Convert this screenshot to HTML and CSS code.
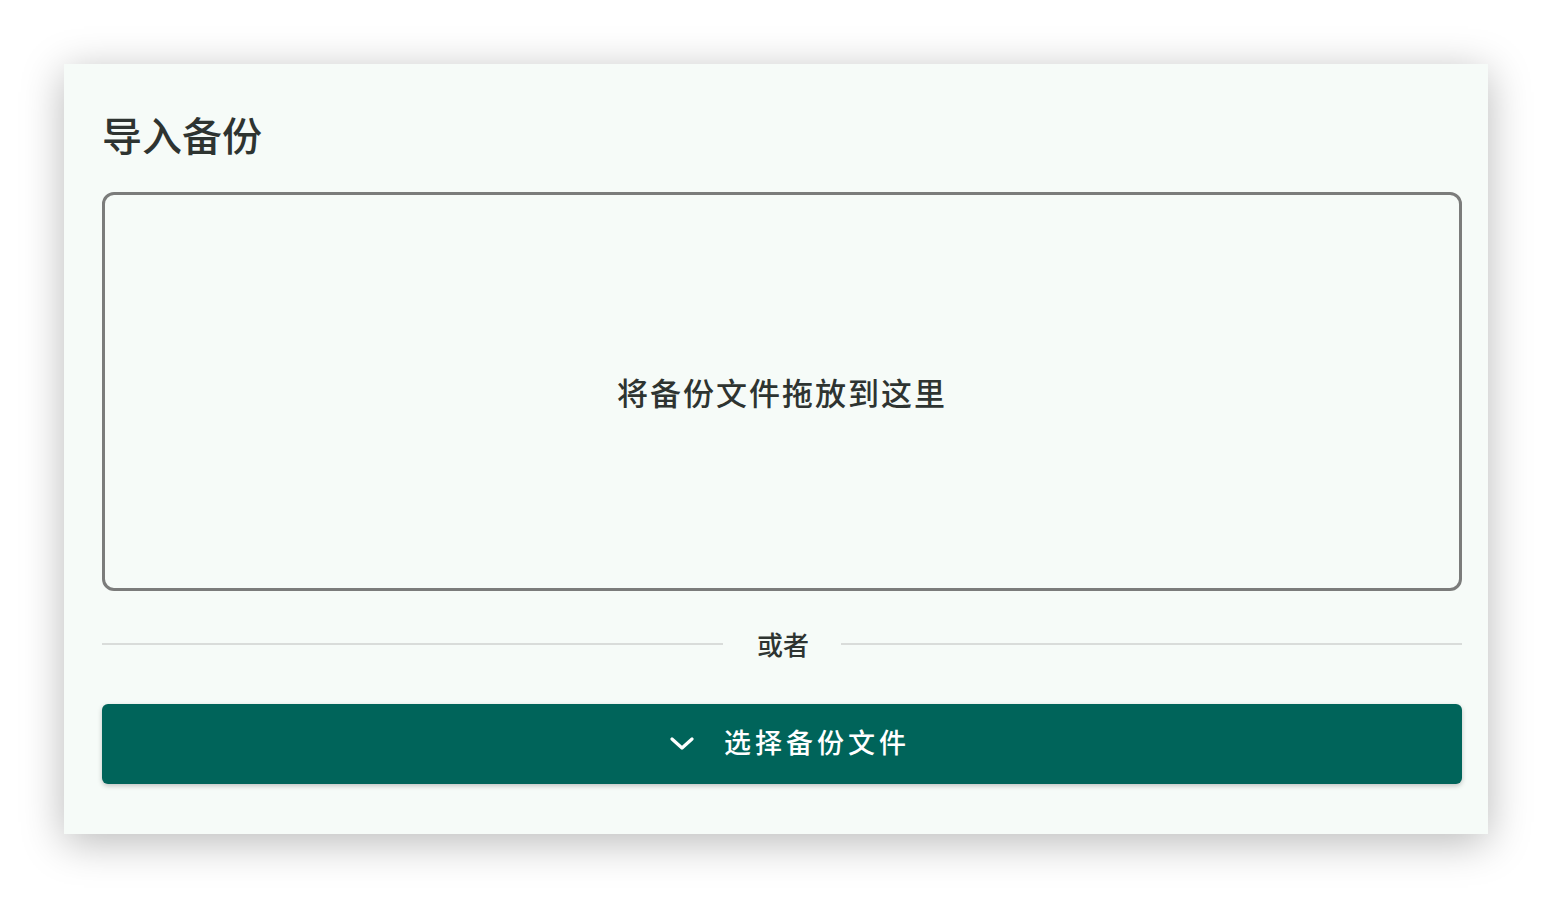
FILE: index.html
```html
<!DOCTYPE html>
<html lang="zh">
<head>
<meta charset="utf-8">
<link rel="stylesheet" href="styles.css">
</head>
<body>
<div class="page">
  <section class="card">
    <h1 class="title">导入备份</h1>
    <div class="dropzone">将备份文件拖放到这里</div>
    <div class="divider"><span class="line"></span><span class="or">或者</span><span class="line"></span></div>
    <button class="pick">
      <svg class="chev" width="24" height="14" viewBox="0 0 24 14"><path d="M2 2 L12 11 L22 2" fill="none" stroke="#fff" stroke-width="3.2" stroke-linecap="round" stroke-linejoin="round"/></svg>
      <span class="pick-label">选择备份文件</span>
    </button>
  </section>
</div>
</body>
</html>
```

FILE: styles.css
```css
html, body {
  margin: 0;
  padding: 0;
  background: #ffffff;
}
body {
  font-family: "Noto Sans CJK SC", "Noto Sans", sans-serif;
  color: #2e3431;
}
.page {
  padding: 64px;
}
.card {
  box-sizing: border-box;
  width: 1424px;
  height: 770px;
  background: #f6fbf8;
  box-shadow: 0 8px 40px rgba(0, 0, 0, 0.28);
  padding: 46px 26px 50px 38px;
  display: flex;
  flex-direction: column;
}
.title {
  margin: 0;
  font-size: 40px;
  line-height: 48px;
  font-weight: 500;
  color: #2e3431;
}
.dropzone {
  box-sizing: border-box;
  margin-top: 34px;
  height: 399px;
  border: 3px solid #7b7c7b;
  border-radius: 12px;
  display: flex;
  align-items: center;
  justify-content: center;
  font-size: 31px;
  letter-spacing: 2px;
  font-weight: 500;
  color: #2e3431;
}
.divider {
  margin-top: 35px;
  height: 36px;
  display: flex;
  align-items: center;
}
.line {
  flex: 1;
  height: 2px;
  background: #d9dcda;
}
.or {
  padding: 0 32px 0 34px;
  font-size: 26px;
  line-height: 36px;
  font-weight: 500;
  color: #2e3431;
}
.pick {
  margin-top: 42px;
  height: 80px;
  border: none;
  border-radius: 6px;
  background: #00645a;
  box-shadow: 0 2px 5px rgba(0, 0, 0, 0.22);
  display: flex;
  align-items: center;
  justify-content: center;
  gap: 30px;
  color: #ffffff;
  font-family: "Noto Sans CJK SC", "Noto Sans", sans-serif;
  padding: 0 0 0 6px;
}
.chev {
  display: block;
  margin-left: 10px;
}
.pick-label {
  font-size: 27px;
  letter-spacing: 4px;
  font-weight: 500;
  margin-top: -6px;
}
```
